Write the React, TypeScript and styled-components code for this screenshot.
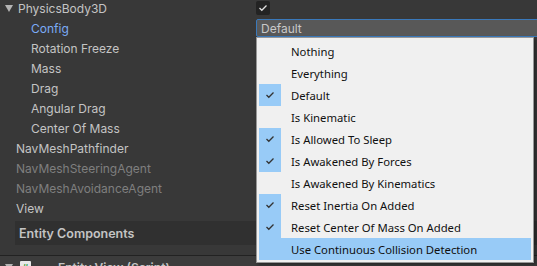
import React from 'react';
import styled, { createGlobalStyle } from 'styled-components';

const GlobalStyle = createGlobalStyle`
  html, body {
    margin: 0;
    padding: 0;
    background: #383838;
  }
  * {
    box-sizing: border-box;
  }
`;

const Inspector = styled.div`
  position: relative;
  width: 537px;
  height: 266px;
  overflow: hidden;
  background: #383838;
  font-family: Inter, 'Noto Sans', sans-serif;
  font-size: 12px;
  color: #c4c4c4;
`;

const Rows = styled.div`
  display: flex;
  flex-direction: column;
  margin-top: -2px;
`;

const Row = styled.div`
  display: grid;
  grid-template-columns: 256px 1fr;
  align-items: center;
  height: 20px;
`;

const Label = styled.div<{ $indent?: number; $tone?: 'normal' | 'active' | 'disabled' }>`
  display: flex;
  align-items: center;
  gap: 3px;
  padding-left: ${(p) => 16 + (p.$indent ?? 0) * 15}px;
  color: ${(p) =>
    p.$tone === 'active' ? '#7babf6' : p.$tone === 'disabled' ? '#7f7f7f' : '#c4c4c4'};
  white-space: nowrap;
`;

const Foldout = styled.span<{ $inline?: boolean }>`
  position: relative;
  left: ${(p) => (p.$inline ? 0 : -2)}px;
  margin-left: ${(p) => (p.$inline ? 0 : -9)}px;
  width: 0;
  height: 0;
  border-left: 4px solid transparent;
  border-right: 4px solid transparent;
  border-top: 7px solid #b4b4b4;
`;

const Toggle = styled.div`
  width: 14px;
  height: 14px;
  margin-top: -1px;
  border-radius: 2px;
  background: #232323;
  display: flex;
  align-items: center;
  justify-content: center;
`;

const Field = styled.div`
  height: 18px;
  margin-right: -4px;
  padding-left: 4px;
  display: flex;
  align-items: center;
  background: #585858;
  border: 1px solid #3a79bb;
  border-radius: 2px 0 0 2px;
  color: #c8c8c8;
`;

const SectionHeader = styled.div`
  height: 24px;
  margin: 3px 0 0 15px;
  padding-left: 4px;
  display: flex;
  align-items: center;
  background: #303030;
  font-weight: 600;
  font-size: 12.5px;
  color: #c4c4c4;
`;

const Divider = styled.div`
  height: 1px;
  margin-top: 10px;
  background: #222222;
`;

const ComponentRow = styled.div`
  display: flex;
  align-items: center;
  height: 22px;
  padding-left: 5px;
  background: #3c3c3c;
  font-weight: 600;
`;

const ScriptIcon = styled.div`
  width: 11px;
  height: 13px;
  margin-left: 7px;
  margin-right: 27px;
  background: #e8e8e8;
  border-radius: 1px;
  color: #2e9b3a;
  font-size: 9px;
  font-weight: 700;
  line-height: 13px;
  text-align: center;
`;

const Menu = styled.div`
  position: absolute;
  left: 256px;
  top: 37px;
  width: 278px;
  padding: 2px;
  background: #f0f0f0;
  border: 1px solid #979797;
  box-shadow: 2px 2px 3px rgba(0, 0, 0, 0.35);
  font-family: 'Noto Sans', 'Open Sans', sans-serif;
  font-size: 11.3px;
  color: #101010;
`;

const MenuItem = styled.div<{ $hover?: boolean }>`
  display: flex;
  align-items: center;
  height: 22px;
  background: ${(p) => (p.$hover ? '#98cbf7' : 'transparent')};
`;

const CheckCell = styled.div<{ $on?: boolean }>`
  width: 22px;
  height: 22px;
  margin-right: 10px;
  display: flex;
  align-items: center;
  justify-content: center;
  background: ${(p) => (p.$on ? '#98cbf7' : 'transparent')};
`;

const Check = ({ color = '#333' }: { color?: string }) => (
  <svg width="10" height="8" viewBox="0 0 10 8">
    <polyline points="1.5,4 3.8,6.3 8.5,1.5" fill="none" stroke={color} strokeWidth="1.3" />
  </svg>
);

const props = [
  { name: 'Config', indent: 1, tone: 'active' as const, field: true },
  { name: 'Rotation Freeze', indent: 1 },
  { name: 'Mass', indent: 1 },
  { name: 'Drag', indent: 1 },
  { name: 'Angular Drag', indent: 1 },
  { name: 'Center Of Mass', indent: 1 },
  { name: 'NavMeshPathfinder' },
  { name: 'NavMeshSteeringAgent', tone: 'disabled' as const },
  { name: 'NavMeshAvoidanceAgent', tone: 'disabled' as const },
  { name: 'View' },
];

const options = [
  { label: 'Nothing' },
  { label: 'Everything' },
  { label: 'Default', on: true },
  { label: 'Is Kinematic' },
  { label: 'Is Allowed To Sleep', on: true },
  { label: 'Is Awakened By Forces', on: true },
  { label: 'Is Awakened By Kinematics' },
  { label: 'Reset Inertia On Added', on: true },
  { label: 'Reset Center Of Mass On Added', on: true },
  { label: 'Use Continuous Collision Detection', hover: true },
];

export default function App() {
  return (
    <>
      <GlobalStyle />
      <Inspector>
        <Rows>
          <Row>
            <Label>
              <Foldout />
              PhysicsBody3D
            </Label>
            <Toggle>
              <Check color="#e0e0e0" />
            </Toggle>
          </Row>
          {props.map((p) => (
            <Row key={p.name}>
              <Label $indent={p.indent} $tone={p.tone}>
                {p.name}
              </Label>
              {p.field && <Field>Default</Field>}
            </Row>
          ))}
        </Rows>
        <SectionHeader>Entity Components</SectionHeader>
        <Divider />
        <ComponentRow>
          <Foldout $inline />
          <ScriptIcon>#</ScriptIcon>
          Entity View (Script)
        </ComponentRow>
        <Menu>
          {options.map((o) => (
            <MenuItem key={o.label} $hover={o.hover}>
              <CheckCell $on={o.on}>{o.on && <Check />}</CheckCell>
              {o.label}
            </MenuItem>
          ))}
        </Menu>
      </Inspector>
    </>
  );
}
